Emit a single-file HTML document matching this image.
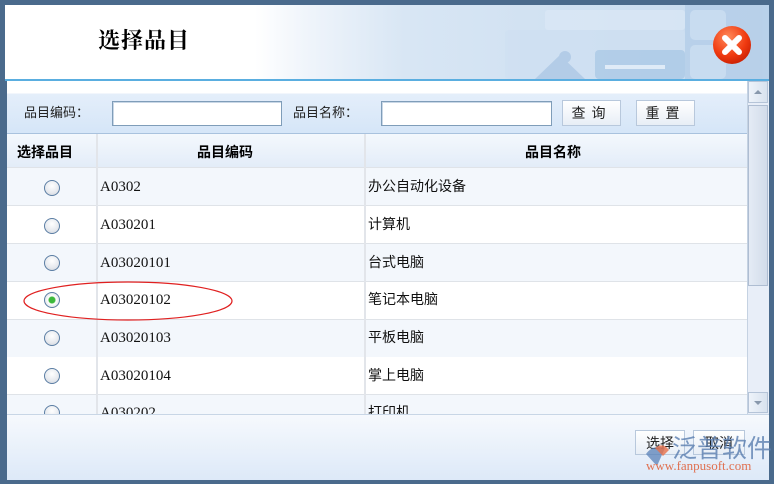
<!DOCTYPE html>
<html><head><meta charset="utf-8"><style>
*{margin:0;padding:0;box-sizing:border-box}
body{width:774px;height:484px;background:#4a6a8c;position:relative;overflow:hidden;font-family:"Liberation Sans","Noto Sans CJK SC",sans-serif}
.abs{position:absolute}
#hdr{left:5px;top:5px;width:764px;height:74px;background:linear-gradient(90deg,#fff 0,#fff 250px,#f0f5fb 300px,#d8e6f4 400px,#c6daef 100%);overflow:hidden}
#title{left:98px;top:24px;font:bold 22px "Noto Serif CJK SC","Noto Sans CJK SC",serif;color:#000;letter-spacing:1px;line-height:32px}
#line{left:5px;top:79px;width:764px;height:2px;background:#5aaee0}
#srch{left:7px;top:81px;width:740px;height:53px;background:linear-gradient(180deg,#fff 0,#fff 12px,#e4eefa 13px,#d6e6f8 50px);border-bottom:1px solid #a9c2de}
.lbl{font-size:13px;color:#222;top:104px;line-height:18px}
.inp{top:101px;height:25px;background:#fff;border:1px solid #7f9db9;box-shadow:inset 1px 1px 0 #c9d7e6}
.btn{top:100px;height:26px;background:linear-gradient(#fff,#e8eef6);border:1px solid #b8c8dc;font-size:14px;text-align:center;line-height:24px;letter-spacing:6px;color:#222}
#th{left:7px;top:134px;width:740px;height:34px;background:linear-gradient(#f4f8fd,#e2ecf8);font-weight:bold;font-size:14px;line-height:20px}
.row{left:7px;width:740px;height:38px;border-bottom:1px solid #dfe3e8}
.vl{top:134px;width:2px;height:280px;background:#e2e5ea}
.code{font:15px/20px "Liberation Serif",serif;color:#111;left:100px}
.name{font-size:14px;line-height:20px;color:#111;left:368px}
.rad{left:44px;width:16px;height:16px;border-radius:50%;border:1.5px solid #5b7ea4;background:radial-gradient(circle at 50% 35%,#fff,#e6e9ee 60%,#c9ced6)}
#foot{left:7px;top:414px;width:762px;height:66px;background:linear-gradient(#f6f9fd,#dde9f8);border-top:1px solid #c8d6e6}
#sb{left:747px;top:81px;width:22px;height:333px;background:#e8eef8;border-left:1px solid #c5d2e2}
</style></head><body>
<div id="hdr" class="abs">
<svg class="abs" style="left:380px;top:0" width="384" height="74"><g opacity=".75"><rect x="300" y="0" width="84" height="74" fill="#b3cde8"/><rect x="305" y="5" width="36" height="30" rx="5" fill="#c8dcf0"/><rect x="305" y="40" width="36" height="34" rx="5" fill="#c8dcf0"/><rect x="120" y="25" width="180" height="49" rx="4" fill="#cfe0f2"/><rect x="210" y="45" width="90" height="29" rx="4" fill="#a9c8e6"/><rect x="160" y="5" width="140" height="20" rx="3" fill="#dbe8f6"/><rect x="220" y="60" width="60" height="4" fill="#e6f0fa"/><circle cx="180" cy="52" r="6" fill="#aac6e4"/><path d="M150 74 L175 50 L200 74Z" fill="#aac6e4"/></g></svg>
</div>
<div id="title" class="abs">选择品目</div>
<svg class="abs" style="left:711px;top:24px" width="42" height="42"><defs><radialGradient id="g" cx=".4" cy=".3" r=".8"><stop offset="0" stop-color="#ff8a5a"/><stop offset=".6" stop-color="#f03a10"/><stop offset="1" stop-color="#c01a00"/></radialGradient></defs><circle cx="21" cy="21" r="19" fill="url(#g)"/><path d="M14 14 L28 28 M28 14 L14 28" stroke="#fff" stroke-width="6" stroke-linecap="round"/></svg>
<div id="line" class="abs"></div>
<div id="srch" class="abs"></div>
<div class="abs lbl" style="left:24px">品目编码：</div>
<div class="abs inp" style="left:112px;width:170px"></div>
<div class="abs lbl" style="left:293px">品目名称：</div>
<div class="abs inp" style="left:381px;width:171px"></div>
<div class="abs btn" style="left:562px;width:59px">查询</div>
<div class="abs btn" style="left:636px;width:59px">重置</div>
<div id="th" class="abs"><span class="abs" style="left:10px;top:8px">选择品目</span><span class="abs" style="left:190px;top:8px">品目编码</span><span class="abs" style="left:518px;top:8px">品目名称</span></div>
<div class="abs" style="left:7px;top:167px;width:740px;height:1px;background:#dfe3e8"></div>
<div class="abs row" style="top:168px;background:#f3f7fc"></div>
<div class="abs row" style="top:206px;background:#fff"></div>
<div class="abs row" style="top:244px;background:#f3f7fc"></div>
<div class="abs row" style="top:282px;background:#fff"></div>
<div class="abs row" style="top:320px;background:#f3f7fc"></div>
<div class="abs row" style="top:357px;background:#fff"></div>
<div class="abs row" style="top:395px;background:#f3f7fc"></div>
<div class="abs vl" style="left:96px"></div>
<div class="abs vl" style="left:364px"></div>
<div class="abs rad" style="top:180px"></div><div class="abs code" style="top:177px">A0302</div><div class="abs name" style="top:176px">办公自动化设备</div>
<div class="abs rad" style="top:218px"></div><div class="abs code" style="top:215px">A030201</div><div class="abs name" style="top:214px">计算机</div>
<div class="abs rad" style="top:255px"></div><div class="abs code" style="top:253px">A03020101</div><div class="abs name" style="top:252px">台式电脑</div>
<div class="abs rad" style="top:292px;background:radial-gradient(circle,#3cb83c 0,#3cb83c 3px,#fff 4px,#e6e9ee 70%)"></div><div class="abs code" style="top:290px">A03020102</div><div class="abs name" style="top:289px">笔记本电脑</div>
<div class="abs rad" style="top:330px"></div><div class="abs code" style="top:328px">A03020103</div><div class="abs name" style="top:327px">平板电脑</div>
<div class="abs rad" style="top:368px"></div><div class="abs code" style="top:366px">A03020104</div><div class="abs name" style="top:365px">掌上电脑</div>
<div class="abs rad" style="top:405px"></div><div class="abs code" style="top:403px">A030202</div><div class="abs name" style="top:402px">打印机</div>
<svg class="abs" style="left:22px;top:280px" width="212" height="42"><ellipse cx="106" cy="21" rx="104" ry="19" fill="none" stroke="#e02020" stroke-width="1.2"/></svg>
<div id="foot" class="abs"></div>
<div id="sb" class="abs"></div>
<div class="abs" style="left:748px;top:81px;width:20px;height:22px;background:linear-gradient(90deg,#eef3fa,#d8e2ee);border:1px solid #b5c4d8"><div class="abs" style="left:5px;top:8px;border:4px solid transparent;border-bottom:4px solid #8898ac;border-top:0"></div></div>
<div class="abs" style="left:748px;top:105px;width:20px;height:181px;background:linear-gradient(90deg,#e4ebf5,#d2dcea);border:1px solid #aebdd2"></div>
<div class="abs" style="left:748px;top:392px;width:20px;height:21px;background:linear-gradient(90deg,#eef3fa,#d8e2ee);border:1px solid #b5c4d8"><div class="abs" style="left:5px;top:8px;border:4px solid transparent;border-top:4px solid #8898ac;border-bottom:0"></div></div>
<div class="abs btn" style="left:635px;top:430px;width:50px;height:25px;letter-spacing:0;font-size:14px">选择</div>
<div class="abs btn" style="left:693px;top:430px;width:52px;height:25px;letter-spacing:0;font-size:14px">取消</div>
<svg class="abs" style="left:643px;top:440px" width="30" height="30"><path d="M3 14 Q10 4 22 8 L14 26 Z" fill="#5a82b8" opacity=".75"/><path d="M12 8 Q20 2 26 10 L20 16Z" fill="#e8704a" opacity=".8"/></svg>
<div class="abs" style="left:672px;top:434px;font-size:25px;line-height:30px;color:#5a7eb0;opacity:.8;letter-spacing:0">泛普软件</div>
<div class="abs" style="left:646px;top:459px;font:13px/14px 'Liberation Serif',serif;color:#e07050">www.fanpusoft.com</div>
</body></html>
